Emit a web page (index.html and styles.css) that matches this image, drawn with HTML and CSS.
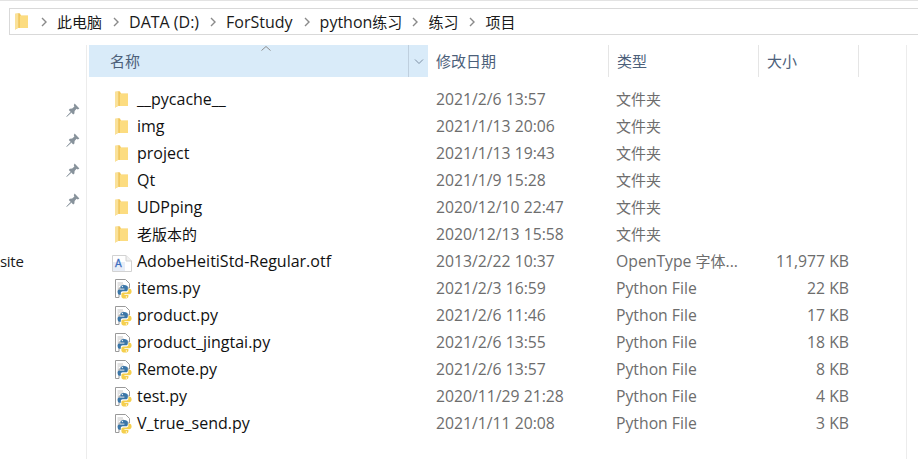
FILE: index.html
```html
<!DOCTYPE html>
<html lang="zh-CN">
<head>
  <meta charset="UTF-8" />
  <title>项目</title>
  <link rel="stylesheet" href="styles.css">
</head>
<body>
  <svg class="defs" width="0" height="0">
    <defs>
      <symbol id="folder" viewBox="0 0 13 17">
        <path d="M0 .8 L5 .5 L6 2.4 L13 2.4 L13 15 L3 15 L0 16.5 Z" fill="#f8cf62"/>
        <path d="M4.5 3 L13 3 L13 15 L4.5 15 Z" fill="#fcdc80"/>
        <path d="M0 1 L3.6 0 L3.6 14.6 L0 16.8 Z" fill="#fae199"/>
        <path d="M3.6 0 L4.5 .4 L4.5 15 L3.6 14.6 Z" fill="#e9bb50"/>
      </symbol>
      <symbol id="pin" viewBox="0 0 14 14">
        <path d="M8.6 0.6 L13.4 5.4 L11.8 6.4 L10.6 5.8 L8.6 8 L8.4 10.4 L7.2 11.4 L2.8 7 L3.8 5.8 L6.2 5.6 L8.4 3.6 L7.8 2.2 Z" fill="#87929b"/>
        <path d="M4.6 9.2 L0.6 13.6 L5 9.8 Z" fill="#87929b" stroke="#87929b" stroke-width=".6"/>
      </symbol>
      <symbol id="python" viewBox="0 0 18 20">
        <path d="M.5 .5 H10.5 L14.5 4.5 V9 H4 V18.5 H.5 Z" fill="#fff" stroke="#9a9a9a"/>
        <path d="M2.5 4 H8 M2.5 6 H9 M2.5 8 H4 M2.5 10 H4 M2.5 12 H4" stroke="#c4c4c4"/>
        <path d="M9 6 C6.4 6 5.4 7 5.4 8.2 V9.6 H9.4 V10.4 H4.4 C3 10.4 2.6 11.6 2.6 13 C2.6 14.6 3.2 15.8 4.6 15.8 H5.8 V14 C5.8 13 6.6 12.2 7.6 12.2 H11 C12 12.2 12.8 11.4 12.8 10.4 V8.2 C12.8 7 11.6 6 9 6 Z" fill="#3a76a8"/>
        <path d="M9.6 19.6 C12.4 19.6 13.4 18.6 13.4 17.4 V16 H9.4 V15.2 H14.4 C15.8 15.2 16.6 14 16.6 12.6 C16.6 11 16 9.8 14.6 9.8 H13.4 V11.6 C13.4 12.6 12.6 13.4 11.6 13.4 H8.2 C7.2 13.4 6.4 14.2 6.4 15.2 V17.4 C6.4 18.6 7.6 19.6 9.6 19.6 Z" fill="#f5cf4d"/>
        <circle cx="7.4" cy="7.6" r=".7" fill="#fff"/>
        <circle cx="11.4" cy="18" r=".7" fill="#fff"/>
      </symbol>
      <symbol id="font" viewBox="0 0 20 17">
        <path d="M.5 .5 H14 L19.5 6 V16.5 H.5 Z" fill="#fff" stroke="#d2d2d2"/>
        <path d="M14 .5 V6 H19.5" fill="#f0f0f0" stroke="#d2d2d2"/>
        <path d="M1 7 H13 V16 H1 Z" fill="#e8edf6"/>
      </symbol>
      <symbol id="chev" viewBox="0 0 6 10">
        <path d="M1 1 L5 5 L1 9" fill="none" stroke="#8a8a8a" stroke-width="1.4"/>
      </symbol>
    </defs>
  </svg>

  <div class="address">
    <svg class="crumb-folder"><use href="#folder"/></svg>
    <svg class="chev"><use href="#chev"/></svg><span class="cjk">此电脑</span>
    <svg class="chev"><use href="#chev"/></svg><span>DATA (D:)</span>
    <svg class="chev"><use href="#chev"/></svg><span>ForStudy</span>
    <svg class="chev"><use href="#chev"/></svg><span class="crumb-mixed">python<span class="cjk">练习</span></span>
    <svg class="chev"><use href="#chev"/></svg><span class="cjk">练习</span>
    <svg class="chev"><use href="#chev"/></svg><span class="cjk">项目</span>
  </div>

  <div class="main">
    <div class="nav">
      <div class="pins">
        <svg class="pin"><use href="#pin"/></svg>
        <svg class="pin"><use href="#pin"/></svg>
        <svg class="pin"><use href="#pin"/></svg>
        <svg class="pin"><use href="#pin"/></svg>
      </div>
      <div class="nav-label">site</div>
    </div>

    <div class="list">
      <div class="head">
        <div class="head-name">
          <span>名称</span>
          <svg class="sort" viewBox="0 0 10 5"><path d="M.5 4.5 L5 .5 L9.5 4.5" fill="none" stroke="#8d8d8d"/></svg>
          <div class="drop"><svg viewBox="0 0 9 5"><path d="M.5 .5 L4.5 4.5 L8.5 .5" fill="none" stroke="#7d8ea3"/></svg></div>
        </div>
        <div class="head-cell">修改日期</div>
        <div class="head-cell">类型</div>
        <div class="head-cell">大小</div>
      </div>

      <div class="rows">
        <div class="row"><div class="name"><svg class="ico-folder"><use href="#folder"/></svg>__pycache__</div><div class="col">2021/2/6 13:57</div><div class="col cjk">文件夹</div><div class="col size"></div></div>
        <div class="row"><div class="name"><svg class="ico-folder"><use href="#folder"/></svg>img</div><div class="col">2021/1/13 20:06</div><div class="col cjk">文件夹</div><div class="col size"></div></div>
        <div class="row"><div class="name"><svg class="ico-folder"><use href="#folder"/></svg>project</div><div class="col">2021/1/13 19:43</div><div class="col cjk">文件夹</div><div class="col size"></div></div>
        <div class="row"><div class="name"><svg class="ico-folder"><use href="#folder"/></svg>Qt</div><div class="col">2021/1/9 15:28</div><div class="col cjk">文件夹</div><div class="col size"></div></div>
        <div class="row"><div class="name"><svg class="ico-folder"><use href="#folder"/></svg>UDPping</div><div class="col">2020/12/10 22:47</div><div class="col cjk">文件夹</div><div class="col size"></div></div>
        <div class="row"><div class="name cjk"><svg class="ico-folder"><use href="#folder"/></svg>老版本的</div><div class="col">2020/12/13 15:58</div><div class="col cjk">文件夹</div><div class="col size"></div></div>
        <div class="row"><div class="name"><span class="font-ico"><svg><use href="#font"/></svg><i>A</i></span>AdobeHeitiStd-Regular.otf</div><div class="col">2013/2/22 10:37</div><div class="col">OpenType <span class="cjk">字体</span>...</div><div class="col size">11,977 KB</div></div>
        <div class="row"><div class="name"><svg class="ico-py"><use href="#python"/></svg>items.py</div><div class="col">2021/2/3 16:59</div><div class="col">Python File</div><div class="col size">22 KB</div></div>
        <div class="row"><div class="name"><svg class="ico-py"><use href="#python"/></svg>product.py</div><div class="col">2021/2/6 11:46</div><div class="col">Python File</div><div class="col size">17 KB</div></div>
        <div class="row"><div class="name"><svg class="ico-py"><use href="#python"/></svg>product_jingtai.py</div><div class="col">2021/2/6 13:55</div><div class="col">Python File</div><div class="col size">18 KB</div></div>
        <div class="row"><div class="name"><svg class="ico-py"><use href="#python"/></svg>Remote.py</div><div class="col">2021/2/6 13:57</div><div class="col">Python File</div><div class="col size">8 KB</div></div>
        <div class="row"><div class="name"><svg class="ico-py"><use href="#python"/></svg>test.py</div><div class="col">2020/11/29 21:28</div><div class="col">Python File</div><div class="col size">4 KB</div></div>
        <div class="row"><div class="name"><svg class="ico-py"><use href="#python"/></svg>V_true_send.py</div><div class="col">2021/1/11 20:08</div><div class="col">Python File</div><div class="col size">3 KB</div></div>
      </div>
    </div>
  </div>
</body>
</html>
```

FILE: styles.css
```css
html, body {
  margin: 0;
  padding: 0;
}

body {
  width: 918px;
  height: 459px;
  overflow: hidden;
  background-color: white;
  border-top: 1px solid #e3e3e3;
  box-sizing: border-box;
  font-family: "Open Sans", "Noto Sans CJK SC", sans-serif;
  font-size: 16px;
  color: #1a1a1a;
}

.cjk {
  font-size: 15px;
}

.defs {
  display: block;
  height: 0;
}

.address {
  display: flex;
  align-items: center;
  gap: 10px;
  height: 25px;
  margin: 7px 0 0 9px;
  padding-left: 5px;
  border: 1px solid #d9d9d9;
  border-right: none;
}

.crumb-folder {
  width: 13px;
  height: 17px;
  margin-right: 3px;
}

.address span {
  margin-right: 1px;
}

.address .crumb-mixed,
.address .crumb-mixed span {
  margin-right: 0;
}

.chev {
  width: 6px;
  height: 10px;
}

.main {
  display: flex;
  height: 415px;
  margin-top: 10px;
}

.nav {
  width: 86px;
  flex: none;
  padding-top: 58px;
  border-right: 1px solid #ececec;
}

.pins {
  display: flex;
  flex-direction: column;
  align-items: flex-end;
  gap: 16px;
  padding-right: 6px;
}

.pin {
  width: 14px;
  height: 14px;
}

.nav-label {
  margin-top: 44px;
  font-size: 15px;
  letter-spacing: -0.3px;
  line-height: 20px;
}

.list {
  flex: 1;
  border-right: 1px solid #ececec;
  margin-right: 11px;
}

.head {
  display: grid;
  grid-template-columns: 339px 181px 150px 100px;
  height: 32px;
  line-height: 32px;
  font-size: 15px;
  color: #4c607a;
  padding-left: 2px;
}

.head-name {
  position: relative;
  background-color: #d9ebf9;
  padding-left: 21px;
}

.sort {
  position: absolute;
  left: 172px;
  top: 1px;
  width: 10px;
  height: 5px;
}

.drop {
  position: absolute;
  right: 0;
  top: 0;
  width: 19px;
  height: 32px;
  display: flex;
  align-items: center;
  justify-content: center;
  border-left: 1px solid #bfcfde;
}

.drop svg {
  width: 10px;
  height: 5px;
}

.head-cell {
  padding-left: 8px;
  border-right: 1px solid #e5e5e5;
}

.rows {
  padding-top: 9px;
}

.row {
  display: grid;
  grid-template-columns: 341px 180px 150px 91px;
  height: 27px;
  line-height: 27px;
}

.name {
  display: flex;
  align-items: center;
  padding-left: 27px;
  color: #111;
}

.ico-folder {
  width: 13px;
  height: 17px;
  margin: 0 9px 0 1px;
}

.ico-py {
  width: 18px;
  height: 20px;
  margin: 0 4px 0 1px;
}

.font-ico {
  position: relative;
  width: 20px;
  height: 17px;
  margin: 0 5px 0 -2px;
}

.font-ico svg {
  width: 20px;
  height: 17px;
}

.font-ico i {
  position: absolute;
  left: 3px;
  top: 5px;
  font: 10px/11px "Liberation Sans", sans-serif;
  -webkit-text-stroke: 0.3px #3f6fc0;
  color: #3f6fc0;
}

.col {
  padding-left: 8px;
  font-size: 15.75px;
  color: #6d6d6d;
  white-space: nowrap;
}

.col.cjk,
.col .cjk {
  font-size: 15px;
}

.size {
  text-align: right;
}
```
